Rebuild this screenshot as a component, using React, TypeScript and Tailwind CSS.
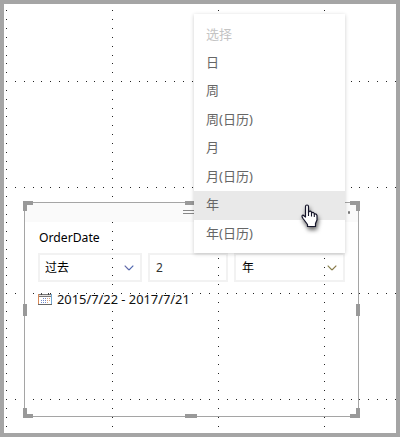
const options = ['选择', '日', '周', '周(日历)', '月', '月(日历)', '年', '年(日历)'];

const guideX = [6, 112, 218, 324];
const guideY = [81, 187, 293, 399];
const pitch = 106 / 12;
const dotX = (i: number) => Math.floor(6 + i * pitch + 0.5);
const dotY = (i: number) => Math.floor(81 + (i - 8) * pitch + 0.5);

function Guides() {
  return (
    <svg className="absolute inset-0" width="400" height="437" shapeRendering="crispEdges" fill="#222">
      {guideX.map((x) => Array.from({ length: 48 }, (_, i) => <rect key={`${x}-${i}`} x={x} y={dotY(i)} width="1" height="1" />))}
      {guideY.map((y) => Array.from({ length: 45 }, (_, i) => <rect key={`${y}-${i}`} x={dotX(i)} y={y} width="1" height="1" />))}
    </svg>
  );
}

function Chevron({ left, right }: { left: string; right: string }) {
  return (
    <svg width="10" height="6" viewBox="0 0 10 6" fill="none" strokeWidth="1.1">
      <path d="M.7.7 5 5" stroke={left} />
      <path d="M5 5 9.3.7" stroke={right} />
    </svg>
  );
}

function Calendar() {
  return (
    <svg width="14" height="12" viewBox="0 0 14 12" shapeRendering="crispEdges">
      <path d="M1 1h12v1H1zM1 3h12v1H1z" fill="#777" />
      <path d="M1 2h12v1H1z" fill="#e6e2e0" />
      <path d="M3 0h1v2H3zM10 0h1v2h-1z" fill="#444" />
      <path d="M0 1h1v10H0z" fill="#d98a58" />
      <path d="M13 1h1v10h-1z" fill="#6fa8d4" />
      <path d="M0 11h14v1H0z" fill="#666" />
      <path d="M5 5h1v1H5zM7 5h1v1H7zM3 7h1v1H3zM5 7h1v1H5zM7 7h1v1H7zM3 9h1v1H3zM5 9h1v1H5zM7 9h1v1H7z" fill="#7088c8" />
      <path d="M9 5h1v1H9zM9 7h1v1H9zM11 5h1v1h-1zM11 7h1v1h-1zM9 9h1v1H9z" fill="#d8a27c" />
    </svg>
  );
}

function Pointer() {
  return (
    <svg className="absolute left-[296px] top-[199px] drop-shadow-[1px_3px_2px_rgba(0,0,0,0.6)]" width="20" height="26" viewBox="0 0 20 26">
      <path
        d="M5.500 3.500Q5.500 2 7 2t1.500 1.500v6l.5-1Q10.500 7.500 11.500 9v1Q13 8.500 14.300 10.500v.5Q16.500 10.500 17 12.500v4.500l-1.500 3.500V23.500H7.500v-2L3 15.500Q1 12.500 3 12l2.500 2Z"
        fill="#fff"
        stroke="#15152a"
        strokeWidth="1.200"
        strokeLinejoin="round"
      />
      <path d="M8.500 9v4M11.500 10v3.500M14.300 11v3" stroke="#15152a" strokeWidth="1.100" />
    </svg>
  );
}

function Handles() {
  return (
    <div className="pointer-events-none absolute -inset-[2px] flex flex-col justify-between">
      <div className="flex items-start justify-between">
        <i className="h-[10px] w-[10px] border-l-4 border-t-4 border-[#999]" />
        <i className="mr-px h-1 w-3 bg-[#999]" />
        <i className="h-[10px] w-[10px] border-r-4 border-t-4 border-[#999]" />
      </div>
      <div className="flex justify-between">
        <i className="h-3 w-1 bg-[#999]" />
        <i className="h-3 w-1 bg-[#999]" />
      </div>
      <div className="flex items-end justify-between">
        <i className="h-[10px] w-[10px] border-b-4 border-l-4 border-[#999]" />
        <i className="mr-px h-1 w-3 bg-[#999]" />
        <i className="h-[10px] w-[10px] border-b-4 border-r-4 border-[#999]" />
      </div>
    </div>
  );
}

function Menu() {
  return (
    <ul className="absolute left-[190px] top-[10px] h-[239px] w-[151px] bg-white pt-[6px] text-[13px] text-[#666] shadow-[0_1px_4px_rgba(0,0,0,0.2)]">
      {options.map((label) => (
        <li
          key={label}
          className={`flex h-[28.5px] items-center pl-3 ${label === '年' ? 'bg-[#e9e9e9]' : ''} ${label === '选择' ? 'text-[#c4c4c4]' : 'pb-[0.6px]'}`}
        >
          {label}
        </li>
      ))}
    </ul>
  );
}

export default function App() {
  return (
    <div className="relative h-[437px] w-[400px] overflow-hidden bg-white font-['Noto_Sans','Noto_Sans_CJK_SC',sans-serif] text-[12px] text-black">
      <Guides />
      <main className="relative flex h-full flex-col border-4 border-[#a5a5a5] pl-5 pt-[198px]">
        <section className="relative h-[215px] w-[335px] border border-[#a5a5a5]">
          <header className="flex h-[19px] items-start justify-between bg-[#fafafa] pl-[158px] pr-2 pt-[7px]">
            <i className="h-1 w-3 border-y border-[#888]" />
            <i className="mt-px h-[2.5px] w-[2.5px] rounded-full bg-[#777]" />
          </header>
          <div className="flex flex-col px-[13px] pt-[7px]">
            <h1 className="h-[18px] pl-px text-[12.2px] leading-[18px]">OrderDate</h1>
            <div className="mt-[6px] flex h-[29px] gap-[6px]">
              <button className="flex w-[104px] items-center justify-between border-2 border-[#f2f2f2] pl-[5px] pr-[6px]">
                过去
                <Chevron left="#6068a8" right="#4f68b0" />
              </button>
              <div className="flex w-20 items-center border-2 border-[#f2f2f2] pl-[6px] pt-px text-[#333]">2</div>
              <button className="flex w-[111px] items-center justify-between border-2 border-[#f2f2f2] pl-[6px] pr-[6px]">
                年
                <Chevron left="#86804c" right="#887848" />
              </button>
            </div>
            <div className="mt-2 flex h-[18px] items-center gap-[5px] whitespace-nowrap">
              <Calendar />
              <span className="pt-[2px] text-[12.85px] text-[#111]">2015/7/22 - 2017/7/21</span>
            </div>
          </div>
          <Handles />
        </section>
        <Menu />
        <Pointer />
      </main>
    </div>
  );
}
